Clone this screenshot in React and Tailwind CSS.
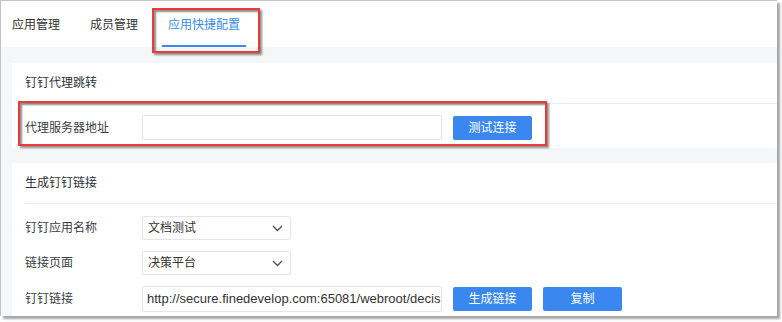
const FONT = { fontFamily: '"Liberation Sans", "Noto Sans CJK SC", sans-serif' };

function Chevron() {
  return (
    <svg width="11" height="7" viewBox="0 0 11 7" fill="none">
      <path d="M1 1l4.5 4.5L10 1" stroke="#4a4f5a" strokeWidth="1.3" />
    </svg>
  );
}

function Select({ value }) {
  return (
    <div className="flex h-[24px] w-[149px] items-center justify-between rounded-[2px] border border-[#e3e5e8] bg-white pl-[5px] pr-[7px] text-[12px] text-[#333]">
      <span>{value}</span>
      <Chevron />
    </div>
  );
}

function Button({ children }) {
  return (
    <button className="ml-[11px] flex h-[24px] w-[79px] items-center justify-center rounded-[2px] bg-[#3a87ef] text-[12px] text-white">
      {children}
    </button>
  );
}

function Row({ label, children }) {
  return (
    <div className="flex items-center">
      <div className="w-[117px] text-[12px] text-[#3a3d44]">{label}</div>
      {children}
    </div>
  );
}

function Card({ title, children, className }) {
  return (
    <div className={`bg-white ${className}`}>
      <div className="flex h-[40px] items-center pl-[13px] text-[12px] text-[#2c3038]">{title}</div>
      <div className="ml-[13px] h-px bg-[#eaecef]" />
      <div className="pl-[13px]">{children}</div>
    </div>
  );
}

export default function App() {
  return (
    <div className="relative h-[322px] w-[782px] bg-white" style={FONT}>
      <div className="flex h-[316px] w-[777px] flex-col overflow-hidden border-l border-t border-[#c4c4c4] bg-[#f5f6f8] shadow-[3px_3px_2px_rgba(0,0,0,0.35)]">
        {/* tabs */}
        <div className="flex h-[46px] items-end gap-[18px] bg-white pl-[5px]">
          <div className="flex h-[45px] items-center px-[6px] text-[12px] text-[#333]">应用管理</div>
          <div className="flex h-[45px] items-center px-[6px] text-[12px] text-[#333]">成员管理</div>
          <div className="flex h-[45px] items-center border-b-2 border-[#3b8bef] px-[6px] pt-[2px] text-[12px] text-[#3a8ee6]">
            应用快捷配置
          </div>
        </div>

        <div className="flex flex-1 flex-col pl-[11px] pt-[16px]">
          <Card title="钉钉代理跳转" className="h-[85px]">
            <div className="pt-[11px]">
              <Row label="代理服务器地址">
                <div className="h-[25px] w-[300px] rounded-[2px] border border-[#e3e5e8] bg-white" />
                <Button>测试连接</Button>
              </Row>
            </div>
          </Card>

          <Card title="生成钉钉链接" className="mt-[15px] flex-1">
            <div className="flex flex-col gap-[11px] pt-[12px]">
              <Row label="钉钉应用名称">
                <Select value="文档测试" />
              </Row>
              <Row label="链接页面">
                <Select value="决策平台" />
              </Row>
              <Row label="钉钉链接">
                <div className="flex h-[26px] w-[300px] items-center overflow-hidden whitespace-nowrap rounded-[2px] border border-[#e3e5e8] bg-white pl-[4px] text-[13px] text-[#333]">
                  http://secure.finedevelop.com:65081/webroot/decis
                </div>
                <Button>生成链接</Button>
                <Button>复制</Button>
              </Row>
            </div>
          </Card>
        </div>
      </div>

      {/* annotation boxes */}
      <div className="absolute left-[152px] top-[8px] h-[45px] w-[108px] border-2 border-[#ee3a36] shadow-[2px_2px_2px_rgba(0,0,0,0.45),inset_2px_2px_2px_rgba(0,0,0,0.45)]" />
      <div className="absolute left-[18px] top-[101px] h-[45px] w-[529px] border-2 border-[#ee3a36] shadow-[2px_2px_2px_rgba(0,0,0,0.45),inset_2px_2px_2px_rgba(0,0,0,0.45)]" />
    </div>
  );
}
